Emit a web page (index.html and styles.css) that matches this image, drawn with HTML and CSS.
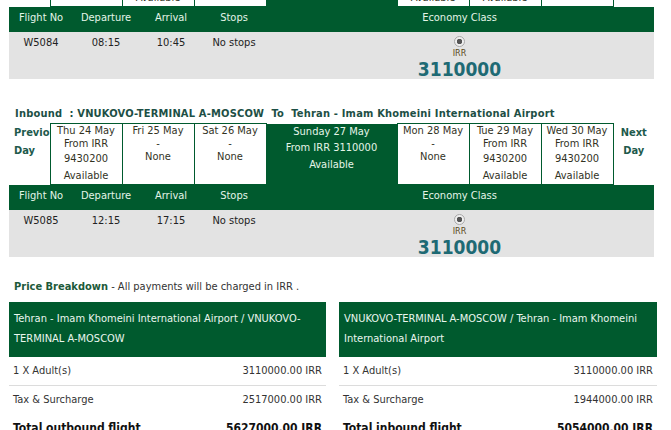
FILE: index.html
```html
<!DOCTYPE html>
<html lang="en">
<head>
  <meta charset="UTF-8">
  <title>Flight selection</title>
  <link rel="stylesheet" href="styles.css">
</head>
<body>
<div class="page">

  <!-- outbound: date strip + flight -->
  <table class="days">
    <colgroup>
      <col class="c-side"><col class="c-day"><col class="c-day"><col class="c-day"><col class="c-sel"><col class="c-day"><col class="c-day"><col class="c-day"><col class="c-side">
    </colgroup>
    <tr>
      <td class="prev">Previous Day</td>
      <td class="day"><div class="dl">Sun 13 May</div><div class="dl">-</div><div class="none">None</div></td>
      <td class="day"><div class="dl">Mon 14 May</div><div class="dl">From IRR</div><div class="pl">9430200</div><div class="pl">Available</div></td>
      <td class="day"><div class="dl">Tue 15 May</div><div class="dl">-</div><div class="none">None</div></td>
      <td class="sel"><div>Wednesday 16 May</div><div>From IRR 3110000</div><div>Available</div></td>
      <td class="day"><div class="dl">Thu 17 May</div><div class="dl">From IRR</div><div class="pl">9430200</div><div class="pl">Available</div></td>
      <td class="day"><div class="dl">Fri 18 May</div><div class="dl">From IRR</div><div class="pl">9430200</div><div class="pl">Available</div></td>
      <td class="day"><div class="dl">Sat 19 May</div><div class="dl">-</div><div class="none">None</div></td>
      <td class="next">Next Day</td>
    </tr>
  </table>
  <table class="flights">
    <colgroup><col class="f1"><col class="f2"><col class="f3"><col class="f4"><col></colgroup>
    <tr><th>Flight No</th><th>Departure</th><th>Arrival</th><th>Stops</th><th>Economy Class</th></tr>
    <tr>
      <td>W5084</td><td>08:15</td><td>10:45</td><td>No stops</td>
      <td class="fare"><span class="radio"></span><div class="cur">IRR</div><div class="amount">3110000</div></td>
    </tr>
  </table>

  <!-- inbound -->
  <div class="leg-title">Inbound&nbsp; : VNUKOVO-TERMINAL A-MOSCOW&nbsp; To&nbsp; Tehran - Imam Khomeini International Airport</div>
  <table class="days">
    <colgroup>
      <col class="c-side"><col class="c-day"><col class="c-day"><col class="c-day"><col class="c-sel"><col class="c-day"><col class="c-day"><col class="c-day"><col class="c-side">
    </colgroup>
    <tr>
      <td class="prev">Previous Day</td>
      <td class="day"><div class="dl">Thu 24 May</div><div class="dl">From IRR</div><div class="pl">9430200</div><div class="pl">Available</div></td>
      <td class="day"><div class="dl">Fri 25 May</div><div class="dl">-</div><div class="none">None</div></td>
      <td class="day"><div class="dl">Sat 26 May</div><div class="dl">-</div><div class="none">None</div></td>
      <td class="sel"><div>Sunday 27 May</div><div>From IRR 3110000</div><div>Available</div></td>
      <td class="day"><div class="dl">Mon 28 May</div><div class="dl">-</div><div class="none">None</div></td>
      <td class="day"><div class="dl">Tue 29 May</div><div class="dl">From IRR</div><div class="pl">9430200</div><div class="pl">Available</div></td>
      <td class="day"><div class="dl">Wed 30 May</div><div class="dl">From IRR</div><div class="pl">9430200</div><div class="pl">Available</div></td>
      <td class="next">Next Day</td>
    </tr>
  </table>
  <table class="flights">
    <colgroup><col class="f1"><col class="f2"><col class="f3"><col class="f4"><col></colgroup>
    <tr><th>Flight No</th><th>Departure</th><th>Arrival</th><th>Stops</th><th>Economy Class</th></tr>
    <tr>
      <td>W5085</td><td>12:15</td><td>17:15</td><td>No stops</td>
      <td class="fare"><span class="radio"></span><div class="cur">IRR</div><div class="amount">3110000</div></td>
    </tr>
  </table>

  <!-- price breakdown -->
  <div class="note"><b>Price Breakdown</b> - All payments will be charged in IRR .</div>
  <div class="summary">
    <div class="box">
      <div class="box-head">Tehran - Imam Khomeini International Airport / VNUKOVO-TERMINAL A-MOSCOW</div>
      <div class="line sep"><span>1 X Adult(s)</span><span>3110000.00 IRR</span></div>
      <div class="line"><span>Tax &amp; Surcharge</span><span>2517000.00 IRR</span></div>
      <div class="line total"><span>Total outbound flight</span><span>5627000.00 IRR</span></div>
    </div>
    <div class="box wide">
      <div class="box-head">VNUKOVO-TERMINAL A-MOSCOW / Tehran - Imam Khomeini International Airport</div>
      <div class="line sep"><span>1 X Adult(s)</span><span>3110000.00 IRR</span></div>
      <div class="line"><span>Tax &amp; Surcharge</span><span>1944000.00 IRR</span></div>
      <div class="line total"><span>Total inbound flight</span><span>5054000.00 IRR</span></div>
    </div>
  </div>

</div>
</body>
</html>
```

FILE: styles.css
```css
body {
  margin: 0;
  background: #fff;
  font-family: "DejaVu Sans Condensed", "Liberation Sans", sans-serif;
  font-size: 11px;
  color: #333;
}

.page {
  margin-top: -55px;
  padding-left: 9px;
  width: 648px;
}

/* date strip */
table.days {
  width: 645px;
  border-collapse: collapse;
  table-layout: fixed;
}

col.c-side { width: 41px; }
col.c-day { width: 72px; }
col.c-sel { width: 131px; }

.days td {
  height: 60px;
  padding: 0;
  vertical-align: top;
  text-align: center;
  overflow: hidden;
}

td.day {
  border: 1px solid #005a2e;
  color: #33331f;
}

.day .dl { line-height: 13px; }
.day .pl { line-height: 17px; }
.day .none { line-height: 14px; }

td.sel {
  background: #005a2e;
  color: #e4f5e8;
  line-height: 16.5px;
}

td.prev, td.next {
  font-weight: bold;
  color: #1e5a4c;
  line-height: 18px;
}

td.prev {
  text-align: left;
  padding-left: 5px;
}

/* flight rows */
table.flights {
  width: 645px;
  border-collapse: collapse;
  table-layout: fixed;
}

col.f1 { width: 64px; }
col.f2 { width: 66px; }
col.f3 { width: 64px; }
col.f4 { width: 62px; }

.flights th {
  background: #005a2e;
  color: #e4f5e8;
  font-weight: normal;
  height: 25px;
  box-sizing: border-box;
  padding: 4px 0 8px;
  line-height: 13px;
  vertical-align: top;
}

.flights td {
  background: #e3e3e3;
  height: 47px;
  box-sizing: border-box;
  padding: 4px 0 0;
  line-height: 13px;
  text-align: center;
  vertical-align: top;
  color: #222;
}

.radio {
  display: block;
  width: 9px;
  height: 9px;
  margin: 0 auto;
  border: 1px solid #a8a8a8;
  border-radius: 50%;
  background: radial-gradient(circle, #555 0 2.5px, #efefef 3px);
}

.cur {
  margin-top: 1px;
  line-height: 11px;
  font-size: 9px;
  color: #5a4a20;
}

.amount {
  line-height: 20px;
  font-size: 19px;
  font-weight: bold;
  color: #1e6a74;
}

.leg-title {
  margin: 27px 0 1px;
  padding-left: 6px;
  line-height: 16px;
  font-weight: bold;
  letter-spacing: 0.2px;
  color: #1d4f45;
}

/* price breakdown */
.note {
  margin: 22px 0 7px 5px;
  line-height: 16px;
}

.note b { color: #1d5a3a; }

.summary {
  display: flex;
  gap: 13px;
}

.box { flex: 0 0 317px; }
.box.wide { flex-basis: 318px; }

.box-head {
  background: #005a2e;
  color: #eaf6ee;
  padding: 7px 5px 8px;
  line-height: 20px;
}

.line {
  display: flex;
  justify-content: space-between;
  padding: 0 4px;
  height: 28px;
  line-height: 28px;
}

.line.sep { border-bottom: 1px solid #dcdcdc; }

.line.total {
  font-weight: bold;
  font-size: 12px;
  color: #111;
}
```
